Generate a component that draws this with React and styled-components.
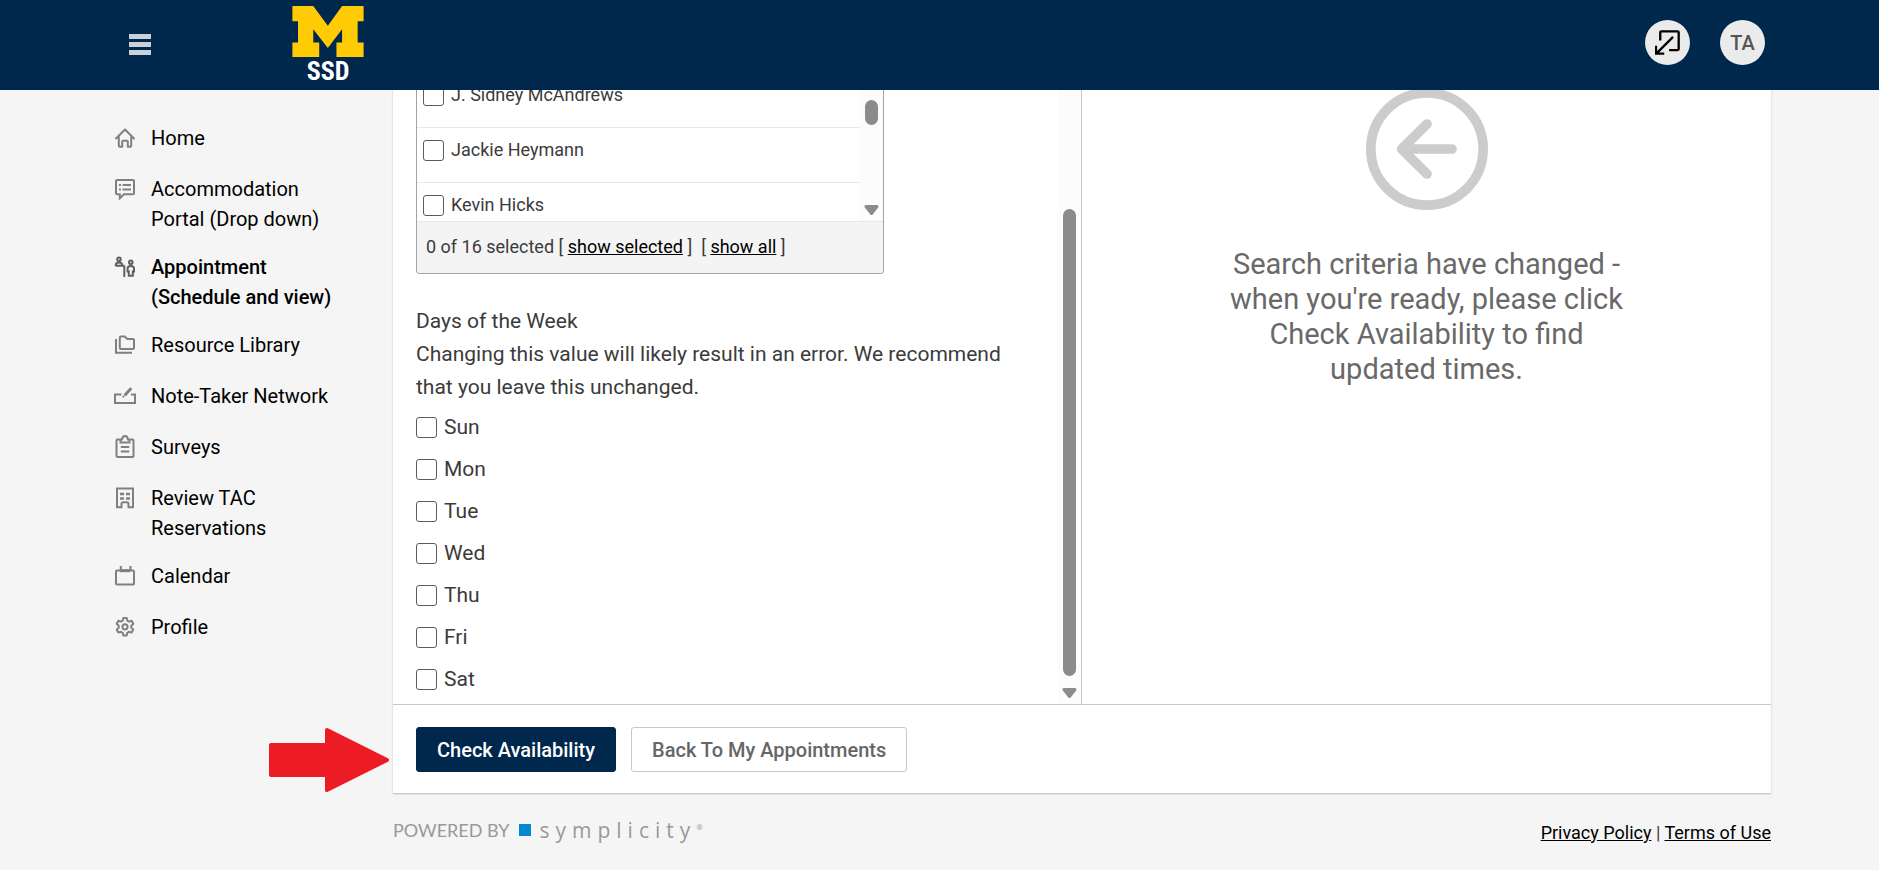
import React from "react"
import styled, { createGlobalStyle, css } from 'styled-components'


const GlobalStyle = createGlobalStyle`
    * {
        box-sizing:border-box;
    }
    body {
        margin:0;
        background:#f5f5f5;
        color:#3b3b3b;
        font-family:Roboto, "Liberation Sans", sans-serif;
        font-size:20px;
        line-height:30px;
    }
    a {
        color:#000;
    }
`

const Page = styled.div`
    display:flex;
    flex-direction:column;
    min-height:100vh;
    overflow:hidden;
`

/* ---------- top bar ---------- */

const TopBar = styled.header`
    position:relative;
    z-index:2;
    display:flex;
    align-items:center;
    height:90px;
    padding:0 114px 2px 129px;
    background:#00274c;
`

const BurgerButton = styled.button`
    display:flex;
    flex-direction:column;
    gap:3px;
    width:22px;
    margin-right:141px;
    padding:0;
    border:0;
    background:none;
    cursor:pointer;
`
const BurgerLine = styled.span`
    height:5px;
    background:#c9d1d9;
`

const Brand = styled.a`
    display:flex;
    flex-direction:column;
    align-items:center;
    gap:2px;
    color:white;
    font-family:"Roboto Condensed", "Open Sans Condensed", Roboto, sans-serif;
    font-size:26px;
    font-weight:bold;
    line-height:24px;
    text-decoration:none;
`

const TopActions = styled.div`
    display:flex;
    gap:30px;
    margin-left:auto;
    padding-bottom:3px;
`
const RoundButton = styled.button`
    display:flex;
    align-items:center;
    justify-content:center;
    width:45px;
    height:45px;
    padding:0;
    border:0;
    border-radius:50%;
    background:#ebebeb;
    color:#555;
    font-family:inherit;
    font-size:20px;
    font-weight:500;
    cursor:pointer;
`

/* ---------- side navigation ---------- */

const Columns = styled.div`
    display:flex;
    flex:1;
    padding:0 108px;
`

const SideNav = styled.nav`
    flex:none;
    width:285px;
    padding:23px 55px 0 7px;
`
const NavList = styled.ul`
    margin:0;
    padding:0;
    list-style:none;
`
const NavLink = styled.a`
    display:flex;
    gap:16px;
    min-height:51px;
    padding:10px 0 8px;
    text-decoration:none;
    font-weight:${props => props.$active ? 500 : 400};

    svg {
        flex:none;
        width:20px;
        height:30px;
        overflow:visible;
        fill:none;
        stroke:${props => props.$active ? "#606060" : "#808080"};
        stroke-width:2;
    }
`

/* ---------- main panel ---------- */

const Main = styled.main`
    flex:1;
    min-width:0;
`

/* the panel is scrolled a little way under the top bar */
const Panel = styled.section`
    margin-top:-18px;
    background:white;
    border-bottom:1px solid #c8c8c8;
    box-shadow:0 0 2px rgba(0,0,0,0.2);
`
const Panes = styled.div`
    display:grid;
    grid-template-columns:1fr 1fr;
    border-bottom:1px solid #c8c8c8;
`
const FilterPane = styled.div`
    display:flex;
    border-right:1px solid #c8c8c8;
`
const FilterBody = styled.form`
    flex:1;
    padding:0 48px 4px 23px;
`

const ScrollTrack = styled.div`
    display:flex;
    flex:none;
    flex-direction:column;
    align-items:center;
    justify-content:space-between;
    width:23px;
    padding:8px 0 6px;
    background:#fcfcfc;
`
const ScrollThumb = styled.div`
    width:13px;
    border-radius:7px;
    background:#8b8b8b;
    ${props => props.$small ? css`
        height:25px;
        margin:10px 0 auto;
    ` : css`
        flex:1;
        margin:119px 0 12px;
    `}
`

const PickBox = styled.div`
    max-width:468px;
    border:1px solid #a3a3a3;
    border-top:0;
    border-radius:0 0 4px 4px;
    font-size:18px;
    overflow:hidden;
`
const PickScroll = styled.div`
    display:flex;
    height:149px;
    overflow:hidden;
`
const PickRows = styled.div`
    flex:1;
    padding-top:1px;
`
const PickRow = styled.label`
    display:flex;
    align-items:flex-start;
    gap:7px;
    height:55px;
    padding:12px 6px;
    border-bottom:1px solid #e8e8e8;
    line-height:20px;
`
const PickFooter = styled.div`
    padding:10px 9px 11px;
    border-top:1px solid #e8e8e8;
    background:#f4f4f4;
`

const Checkbox = styled.input.attrs({ type: "checkbox" })`
    appearance:none;
    flex:none;
    width:21px;
    height:21px;
    margin:0;
    border:1px solid #5c5c5c;
    border-radius:3px;
    background:white;

    &:checked {
        background:#00274c;
    }
`

const DayField = styled.fieldset`
    margin:31px 0 0;
    padding:0;
    border:0;
    font-size:21px;
`
const Legend = styled.legend`
    padding:0;
    line-height:33px;
`
const Hint = styled.p`
    margin:0 0 2px;
    line-height:33px;
`
const DayRow = styled.label`
    display:flex;
    align-items:center;
    gap:7px;
    height:42px;
`

const ResultPane = styled.div`
    display:flex;
    flex-direction:column;
    align-items:center;
    padding-top:16px;
`
const ResultMessage = styled.p`
    max-width:412px;
    margin:37px 0 0;
    color:#696969;
    font-size:29px;
    line-height:35px;
    text-align:center;
`

const Actions = styled.div`
    position:relative;
    display:flex;
    gap:15px;
    padding:22px 23px 21px;
`
const ActionButton = styled.button`
    height:45px;
    padding:0 20px;
    border:1px solid ${props => props.$primary ? "#00274c" : "#c8c8c8"};
    border-radius:3px;
    background:${props => props.$primary ? "#00274c" : "white"};
    color:${props => props.$primary ? "white" : "#666"};
    font-family:inherit;
    font-size:20px;
    font-weight:500;
    cursor:pointer;
`
const PointerArrow = styled.svg`
    position:absolute;
    top:23px;
    right:100%;
    margin-right:4px;
`

const PageFooter = styled.footer`
    display:flex;
    align-items:flex-start;
    justify-content:space-between;
    padding-top:24px;
    font-size:18px;
`
const PoweredBy = styled.div`
    display:flex;
    align-items:center;
    gap:9px;
    color:#999;
    font-family:Lato, sans-serif;
    line-height:24px;
`
const BlueSquare = styled.span`
    width:12px;
    height:12px;
    background:#0488cf;
`
/* logotype with wide tracking */
const Wordmark = styled.span`
    font-family:"Open Sans", sans-serif;
    font-size:21px;
    letter-spacing:6px;

    small {
        font-size:8px;
        vertical-align:8px;
        line-height:8px;
    }
`


const HomeIcon = () => (
    <svg viewBox="0 0 20 20">
        <path d="M1 10.5 10 1.5l9 9M3.8 8.5v9.2q0 1 1 1h2.4v-5.2q0-.8.8-.8h4q.8 0 .8.8v5.2h2.4q1 0 1-1V8.5" strokeLinejoin="round" strokeLinecap="round" />
    </svg>
)
const PortalIcon = () => (
    <svg viewBox="0 0 20 20">
        <path d="M2 1h16q1 0 1 1v12.2q0 1-1 1H9l-4.2 4v-4H2q-1 0-1-1V2q0-1 1-1z" />
        <path d="M4 6h2M4 10.5h2M7.500 6h8.500M7.500 10.5h8.500" />
    </svg>
)
const AppointmentIcon = () => (
    <svg viewBox="0 0 20 20" strokeWidth="1.600">
        <circle cx="4" cy="2.300" r="1.800" />
        <path d="M.8 9.300V8q0-2.500 3.200-2.500T7.200 8v.800H.8M9.300 8.500V20M6 8.800h3.300" />
        <circle cx="15.800" cy="5.300" r="1.800" />
        <path d="M13.800 18.800v-4.200h-1.200v-3q0-2.500 3.200-2.500t3.200 2.500v3h-1.200v4.200z" />
    </svg>
)
const LibraryIcon = () => (
    <svg viewBox="0 0 20 20">
        <path d="M1 4v13.700h16" />
        <path d="M5.800 1.500h4l2.500 2.500H18q1 0 1 1v8q0 1-1 1H5.800q-1 0-1-1V2.500q0-1 1-1z" />
    </svg>
)
const NoteIcon = () => (
    <svg viewBox="0 0 20 20">
        <path d="M6.500 8.500H0v8.500h20V8.500h-4" />
        <path d="m10.500 8.500 5-5.500" strokeWidth="3" strokeLinecap="round" />
        <path d="m7.800 11.200 1.200-1.200" strokeWidth="2" />
    </svg>
)
const SurveyIcon = () => (
    <svg viewBox="0 0 20 20">
        <path d="M6 2.500H2.500q-1 0-1 1V19q0 1 1 1h15q1 0 1-1V3.500q0-1-1-1H14" />
        <path d="M5.500 5.500v-2q0-1 1.500-1Q7.500-1 10-1t3 3.500q1.500 0 1.500 1v2zM5.800 10h8.400M5.800 14.500h8.400" />
    </svg>
)
const BuildingIcon = () => (
    <svg viewBox="0 0 20 20">
        <path d="M2 .5h16v18.700h-4.500v-3.500q0-1.500-1.500-1.500H8q-1.500 0-1.500 1.500v3.500H2z" />
        <path d="M5 6h4M11 6h4M5 10.500h4M11 10.500h4" strokeWidth="2.300" />
    </svg>
)
const CalendarIcon = () => (
    <svg viewBox="0 0 20 20">
        <path d="M2 4.500h16q1 0 1 1v12q0 1-1 1H2q-1 0-1-1v-12q0-1 1-1z" />
        <path d="M5 4.700h10" strokeWidth="3" />
        <path d="M5.800 5V0M15.500 5V0" />
    </svg>
)
const ProfileIcon = () => (
    <svg viewBox="0 0 20 20">
        <path d="M8.300 1h3.400l.6 2.600 1.700 1 2.600-.8 1.700 3-2 1.900v2l2 1.900-1.700 3-2.600-.8-1.700 1-.6 2.700H8.300l-.6-2.700-1.700-1-2.600.8-1.700-3 2-1.900v-2l-2-1.900 1.700-3 2.600.8 1.700-1z" strokeLinejoin="round" />
        <circle cx="10" cy="9.800" r="2.600" />
    </svg>
)

const navItems = [
    { text: "Home", icon: <HomeIcon /> },
    { text: "Accommodation Portal (Drop down)", icon: <PortalIcon /> },
    { text: "Appointment (Schedule and view)", icon: <AppointmentIcon />, active: true },
    { text: "Resource Library", icon: <LibraryIcon /> },
    { text: "Note-Taker Network", icon: <NoteIcon /> },
    { text: "Surveys", icon: <SurveyIcon /> },
    { text: "Review TAC Reservations", icon: <BuildingIcon /> },
    { text: "Calendar", icon: <CalendarIcon /> },
    { text: "Profile", icon: <ProfileIcon /> },
]

const people = ["J. Sidney McAndrews", "Jackie Heymann", "Kevin Hicks"]
const days = ["Sun", "Mon", "Tue", "Wed", "Thu", "Fri", "Sat"]

const ScrollArrow = ({ up }) => (
    <svg width="15" height="10" viewBox="0 0 15 10">
        <path
            d={up ? "M2 8.500h11L7.500 1.500z" : "M2 1.500h11L7.500 8.500z"}
            fill="#8b8b8b" stroke="#8b8b8b" strokeWidth="3" strokeLinejoin="round"
        />
    </svg>
)

const ScrollBar = ({ small }) => (
    <ScrollTrack>
        <ScrollArrow up />
        <ScrollThumb $small={small} />
        <ScrollArrow />
    </ScrollTrack>
)

const Header = () => (
    <TopBar>
        <BurgerButton aria-label="Menu">
            <BurgerLine />
            <BurgerLine />
            <BurgerLine />
        </BurgerButton>

        <Brand href="#">
            <svg width="72" height="51" viewBox="607 18 215 154">
                <path fill="#ffcb05" d="M607 18h63l44 60 43-60h65v46h-18v64h18v44h-82v-44h17V88l-43 57-44-57v40h18v44h-81v-44h17V64h-17z" />
            </svg>
            SSD
        </Brand>

        <TopActions>
            <RoundButton aria-label="Open in window">
                <svg width="25" height="25" viewBox="465 89 76 76" fill="none" stroke="#000" strokeWidth="7">
                    <path d="M481 121V96q0-3 3-3h50q3 0 3 3v51q0 3-3 3h-26M520 110l-51 51M468 137v24h25" />
                </svg>
            </RoundButton>
            <RoundButton>TA</RoundButton>
        </TopActions>
    </TopBar>
)

const Filters = () => (
    <FilterPane>
        <FilterBody>
            <PickBox>
                <PickScroll>
                    <PickRows>
                        {people.map(name => (
                            <PickRow key={name}>
                                <Checkbox />
                                {name}
                            </PickRow>
                        ))}
                    </PickRows>
                    <ScrollBar small />
                </PickScroll>
                <PickFooter>
                    0 of 16 selected [ <a href="#">show selected</a> ] &nbsp;[ <a href="#">show all</a> ]
                </PickFooter>
            </PickBox>

            <DayField>
                <Legend>Days of the Week</Legend>
                <Hint>
                    Changing this value will likely result in an error. We recommend that you leave this unchanged.
                </Hint>
                {days.map(day => (
                    <DayRow key={day}>
                        <Checkbox />
                        {day}
                    </DayRow>
                ))}
            </DayField>
        </FilterBody>
        <ScrollBar />
    </FilterPane>
)

const Results = () => (
    <ResultPane>
        <svg width="122" height="122" viewBox="498 24 366 366" fill="none" stroke="#ccc" strokeWidth="29" strokeLinecap="round" strokeLinejoin="round">
            <circle cx="681" cy="207" r="168.500" />
            <path d="M756 207H605M681 132l-76 75 76 75" />
        </svg>
        <ResultMessage>
            Search criteria have changed - when you're ready, please click Check Availability to find updated times.
        </ResultMessage>
    </ResultPane>
)

const App = () => (
    <Page>
        <GlobalStyle />
        <Header />
        <Columns>
            <SideNav>
                <NavList>
                    {navItems.map(item => (
                        <li key={item.text}>
                            <NavLink href="#" $active={item.active}>
                                {item.icon}
                                <span>{item.text}</span>
                            </NavLink>
                        </li>
                    ))}
                </NavList>
            </SideNav>

            <Main>
                <Panel>
                    <Panes>
                        <Filters />
                        <Results />
                    </Panes>
                    <Actions>
                        <PointerArrow width="120" height="64" viewBox="0 0 120 64">
                            <path d="M2 17h56V2l60 30-60 30V47H2z" fill="#ed1c24" stroke="#ed1c24" strokeWidth="4" strokeLinejoin="round" />
                        </PointerArrow>
                        <ActionButton $primary>Check Availability</ActionButton>
                        <ActionButton>Back To My Appointments</ActionButton>
                    </Actions>
                </Panel>

                <PageFooter>
                    <PoweredBy>
                        POWERED BY
                        <BlueSquare />
                        <Wordmark>symplicity<small>®</small></Wordmark>
                    </PoweredBy>
                    <div>
                        <a href="#">Privacy Policy</a> | <a href="#">Terms of Use</a>
                    </div>
                </PageFooter>
            </Main>
        </Columns>
    </Page>
)

export default App
